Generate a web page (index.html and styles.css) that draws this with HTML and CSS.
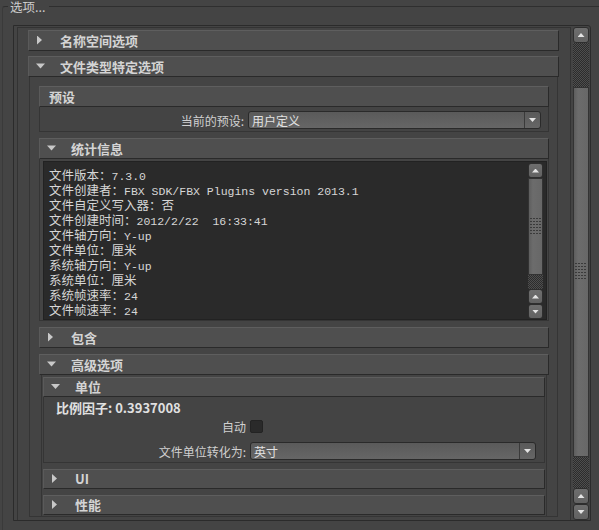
FILE: index.html
```html
<!DOCTYPE html>
<html lang="zh-CN">
<head>
    <meta charset="UTF-8">
    <meta name="viewport" content="width=device-width, initial-scale=1.0">
    <title>选项</title>
    <link rel="stylesheet" href="styles.css">
</head>
<body>
    <div class="group">
        <div class="group-title">选项...</div>
        <div class="frame">
            <div class="viewport">
                <div class="header"><span class="arrow closed"></span>名称空间选项</div>
                <div class="section">
                    <div class="header"><span class="arrow open"></span>文件类型特定选项</div>
                    <div class="body file-body">
                        <div class="section">
                            <div class="header plain">预设</div>
                            <div class="body preset-body">
                                <div class="field">
                                    <span class="label preset-label">当前的预设:</span>
                                    <div class="combo preset-combo"><span class="combo-text">用户定义</span><span class="combo-btn"><i class="tri down"></i></span></div>
                                </div>
                            </div>
                        </div>
                        <div class="section">
                            <div class="header"><span class="arrow open"></span>统计信息</div>
                            <div class="body stats-body">
                                <div class="textbox">
                                    <div class="text-lines">
                                        <div class="line"><span class="k">文件版本：</span><span class="v">7.3.0</span></div>
                                        <div class="line"><span class="k">文件创建者：</span><span class="v">FBX SDK/FBX Plugins version 2013.1</span></div>
                                        <div class="line"><span class="k">文件自定义写入器：</span>否</div>
                                        <div class="line"><span class="k">文件创建时间：</span><span class="v">2012/2/22  16:33:41</span></div>
                                        <div class="line"><span class="k">文件轴方向：</span><span class="v">Y-up</span></div>
                                        <div class="line"><span class="k">文件单位：</span>厘米</div>
                                        <div class="line"><span class="k">系统轴方向：</span><span class="v">Y-up</span></div>
                                        <div class="line"><span class="k">系统单位：</span>厘米</div>
                                        <div class="line"><span class="k">系统帧速率：</span><span class="v">24</span></div>
                                        <div class="line"><span class="k">文件帧速率：</span><span class="v">24</span></div>
                                    </div>
                                    <div class="scrollbar small">
                                        <span class="sb-btn"><i class="tri up"></i></span>
                                        <span class="sb-thumb small-thumb"><i class="grip"></i></span>
                                        <span class="sb-track"></span>
                                        <span class="sb-btn"><i class="tri up"></i></span>
                                        <span class="sb-btn"><i class="tri down"></i></span>
                                    </div>
                                </div>
                            </div>
                        </div>
                        <div class="header"><span class="arrow closed"></span>包含</div>
                        <div class="section">
                            <div class="header"><span class="arrow open"></span>高级选项</div>
                            <div class="body adv-body">
                                <div class="section">
                                    <div class="header lvl3"><span class="arrow open"></span>单位</div>
                                    <div class="body units-body">
                                        <div class="scale">比例因子: 0.3937008</div>
                                        <div class="field auto-row">
                                            <span class="label">自动</span>
                                            <span class="checkbox"></span>
                                        </div>
                                        <div class="field convert-row">
                                            <span class="label">文件单位转化为:</span>
                                            <div class="combo units-combo"><span class="combo-text">英寸</span><span class="combo-btn"><i class="tri down"></i></span></div>
                                        </div>
                                    </div>
                                </div>
                                <div class="header lvl3"><span class="arrow closed"></span>UI</div>
                                <div class="header lvl3"><span class="arrow closed"></span>性能</div>
                            </div>
                        </div>
                    </div>
                </div>
            </div>
            <div class="scrollbar main">
                <span class="sb-btn"><i class="tri up"></i></span>
                <span class="sb-track top-track"></span>
                <span class="sb-thumb main-thumb"><i class="grip"></i></span>
                <span class="sb-track"></span>
                <span class="sb-btn"><i class="tri up"></i></span>
                <span class="sb-btn"><i class="tri down"></i></span>
            </div>
        </div>
    </div>
</body>
</html>
```

FILE: styles.css
```css
* {
    box-sizing: border-box;
}

body {
    margin: 0;
    width: 599px;
    height: 530px;
    overflow: hidden;
    background-color: #444444;
    font-family: "Noto Sans CJK SC", "Noto Sans", sans-serif;
    color: #d2d2d2;
}

.group {
    position: relative;
    margin: 6px 0 0 2px;
    height: 530px;
    border-top: 1px solid #2f2f2f;
    border-left: 1px solid #3a3a3a;
    border-top-left-radius: 3px;
    padding: 18px 8px 0 10px;
}

.group-title {
    position: absolute;
    top: -7px;
    left: 5px;
    padding: 0 4px 0 2px;
    background-color: #444444;
    font-size: 12.5px;
    line-height: 14px;
    color: #cccccc;
}

.frame {
    display: flex;
    gap: 2px;
    height: 496px;
    border: 1px solid #2b2b2b;
    border-top-right-radius: 3px;
    padding: 1px 1px 0 3px;
}

.viewport {
    flex: 1;
    display: flex;
    flex-direction: column;
    gap: 5px;
    border: 1px solid #333333;
    border-bottom: none;
    padding: 2px 11px 0 10px;
    overflow: hidden;
}

.section {
    display: flex;
    flex-direction: column;
    flex: none;
}

/* collapsible headers */
.header {
    display: flex;
    align-items: center;
    flex: none;
    height: 21px;
    padding-left: 7px;
    padding-bottom: 1px;
    background-color: #4f4f4f;
    border: 1px solid #2a2a2a;
    border-top-color: #5e5e5e;
    border-left-color: #5a5a5a;
    font-size: 13px;
    font-weight: bold;
    color: #d4d4d4;
    white-space: nowrap;
}

.header.plain {
    padding-left: 9px;
}

.header.lvl3 {
    height: 20px;
}

.arrow {
    width: 9px;
    height: 9px;
    margin-right: 15px;
    flex: none;
    background-color: #c8c8c8;
}

.arrow.closed {
    clip-path: polygon(1px 0, 6px 4.5px, 1px 9px);
}

.arrow.open {
    clip-path: polygon(0 2px, 9px 2px, 4.5px 7px);
}

.body {
    border: 1px solid #353535;
    border-top: none;
}

.file-body {
    display: flex;
    flex-direction: column;
    gap: 6px;
    margin: 0 1px;
    padding: 9px 8px 0 9px;
    height: 440px;
}

.preset-body {
    padding: 4px 0 2px 0;
}

.field {
    display: flex;
    align-items: center;
}

.label {
    font-size: 12px;
    color: #d0d0d0;
    text-align: right;
    padding-right: 4px;
    white-space: nowrap;
}

.preset-label {
    width: 208px;
}

.combo {
    display: flex;
    align-items: center;
    height: 18px;
    border: 1px solid #2a2a2a;
    border-radius: 3px;
    background: linear-gradient(#5a5a5a, #666666);
    font-size: 12px;
    color: #e2e2e2;
}

.combo-text {
    flex: 1;
    padding-left: 3px;
}

.combo-btn {
    display: flex;
    align-items: center;
    justify-content: center;
    align-self: stretch;
    width: 16px;
    border-left: 1px solid #3a3a3a;
}

.preset-combo {
    width: 293px;
}

.tri {
    display: block;
    width: 7px;
    height: 4px;
    background-color: #e4e4e4;
}

.tri.down {
    clip-path: polygon(0 0, 7px 0, 3.5px 4px);
}

.tri.up {
    clip-path: polygon(3.5px 0, 7px 4px, 0 4px);
}

.stats-body {
    padding: 2px 1px 0 3px;
}

.textbox {
    display: flex;
    height: 159px;
    border: 1px solid #222222;
    background-color: #2a2a2a;
    overflow: hidden;
}

.text-lines {
    flex: 1;
    padding: 5px 0 0 5px;
    font-size: 12.5px;
    line-height: 15px;
    color: #d6d6d6;
}

.line {
    height: 15px;
    white-space: pre;
}

.line .v {
    font-family: "Liberation Mono", "Noto Sans CJK SC", monospace;
    font-size: 11.5px;
}

/* scrollbars */
.scrollbar {
    display: flex;
    flex-direction: column;
    flex: none;
}

.scrollbar.main {
    width: 16px;
}

.scrollbar.small {
    width: 15px;
    margin: 1px 3px 0 0;
}

.sb-btn {
    display: flex;
    align-items: center;
    justify-content: center;
    flex: none;
    height: 16px;
    background: linear-gradient(#6e6e6e, #626262);
    border: 1px solid #2e2e2e;
    border-radius: 3px;
}

.small .sb-btn {
    height: 15px;
}

.sb-track {
    flex: 1;
    background: repeating-conic-gradient(#2c2c2c 0 25%, #4e4e4e 0 50%) 0 0 / 2px 2px;
}

.top-track {
    flex: none;
    height: 44px;
}

.sb-thumb {
    display: flex;
    align-items: center;
    justify-content: center;
    flex: none;
    background: linear-gradient(90deg, #5e5e5e, #6c6c6c 30%, #676767);
    border: 1px solid #333333;
}

.main-thumb {
    height: 370px;
}

.small-thumb {
    height: 97px;
}

.grip {
    display: block;
    width: 12px;
    height: 18px;
    background: conic-gradient(from 270deg at 2px 1px, #3a3a3a 25%, transparent 0) 0 0 / 3px 3px;
}

.small-thumb .grip {
    width: 11px;
}

.adv-body {
    display: flex;
    flex-direction: column;
    gap: 6px;
    margin: 0 2px;
    padding: 2px 1px 1px 1px;
}

.units-body {
    height: 66px;
    padding: 4px 0 0 12px;
}

.scale {
    font-size: 13px;
    font-weight: bold;
    line-height: 14px;
    color: #e0e0e0;
}

.auto-row .label,
.convert-row .label {
    width: 194px;
}

.auto-row {
    margin-top: 5px;
    height: 13px;
}

.checkbox {
    width: 13px;
    height: 13px;
    background-color: #2a2a2a;
    border: 1px solid #232323;
    border-radius: 2px;
}

.convert-row {
    margin-top: 9px;
}

.units-combo {
    width: 286px;
}
```
